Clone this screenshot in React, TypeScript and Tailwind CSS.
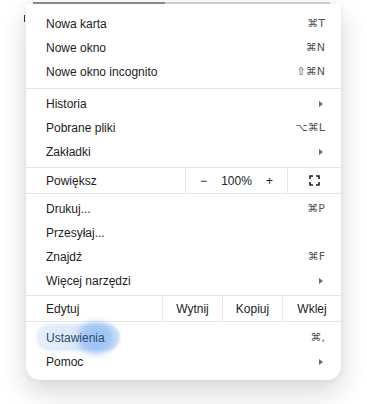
import type { ReactNode } from "react";

const font = { fontFamily: '"Liberation Sans", "DejaVu Sans", Arial, sans-serif' };

// mała strzałka podmenu
function Arrow() {
  return (
    <svg width="6" height="8" viewBox="0 0 6 8" className="mr-[1px]">
      <path d="M1 1 L5 4 L1 7 Z" fill="#6b6b6b" />
    </svg>
  );
}

function FullscreenIcon() {
  return (
    <svg width="11" height="11" viewBox="0 0 11 11" fill="none" stroke="#222" strokeWidth="1.6">
      <path d="M1 4 V1 H4" />
      <path d="M7 1 H10 V4" />
      <path d="M10 7 V10 H7" />
      <path d="M4 10 H1 V7" />
    </svg>
  );
}

function Item({ label, right }: { label: string; right?: ReactNode }) {
  return (
    <div className="flex h-6 items-center justify-between pl-5 pr-4">
      <span className="text-[12px] text-[#222]">{label}</span>
      {typeof right === "string" ? (
        <span className="text-[11px] text-[#555]" style={{ fontFamily: '"DejaVu Sans", sans-serif' }}>
          {right}
        </span>
      ) : (
        right
      )}
    </div>
  );
}

function Sep() {
  return <div className="h-px bg-[#e6e6e6]" />;
}

export default function App() {
  return (
    <div className="relative h-[404px] w-[367px] overflow-hidden bg-white" style={font}>
      {/* pasek przeglądarki pod menu */}
      <div className="absolute left-[33px] top-[2px] h-[2px] w-[132px] bg-[#8b919b]" />
      <div className="absolute left-[165px] top-[2px] h-[2px] w-[165px] bg-[#d5d8dd]" />
      <div className="absolute left-[24px] top-[15px] h-[7px] w-px bg-[#333]" />

      <div className="relative ml-[26px] mt-[4px] w-[315px] rounded-b-[14px] rounded-t-[3px] bg-white pb-[6px] shadow-[0_12px_28px_rgba(0,0,0,0.16),0_0_6px_rgba(0,0,0,0.06)]">
        <div className="pb-1 pt-2">
          <Item label="Nowa karta" right="⌘T" />
          <Item label="Nowe okno" right="⌘N" />
          <Item label="Nowe okno incognito" right="⇧⌘N" />
        </div>
        <Sep />
        <div className="pb-[3px] pt-[3px]">
          <Item label="Historia" right={<Arrow />} />
          <Item label="Pobrane pliki" right="⌥⌘L" />
          <Item label="Zakładki" right={<Arrow />} />
        </div>
        <Sep />
        <div className="flex h-[25px] items-center text-[12px] text-[#222]">
          <div className="flex h-full w-[159px] items-center pl-5">Powiększ</div>
          <div className="flex h-full w-[102px] items-center justify-between border-l border-[#e6e6e6] px-[14px]">
            <span>−</span>
            <span>100%</span>
            <span>+</span>
          </div>
          <div className="flex h-full flex-1 items-center justify-center border-l border-[#e6e6e6]">
            <FullscreenIcon />
          </div>
        </div>
        <Sep />
        <div className="pb-[2px] pt-[3px]">
          <Item label="Drukuj..." right="⌘P" />
          <Item label="Przesyłaj..." />
          <Item label="Znajdź" right="⌘F" />
          <Item label="Więcej narzędzi" right={<Arrow />} />
        </div>
        <Sep />
        <div className="flex h-[25px] items-center text-[12px] text-[#222]">
          <div className="flex h-full w-[136px] items-center pl-5">Edytuj</div>
          <div className="flex h-full w-[60px] items-center justify-center border-l border-[#e6e6e6]">Wytnij</div>
          <div className="flex h-full w-[60px] items-center justify-center border-l border-[#e6e6e6]">Kopiuj</div>
          <div className="flex h-full flex-1 items-center justify-center border-l border-[#e6e6e6]">Wklej</div>
        </div>
        <Sep />
        <div className="relative pt-1">
          {/* efekt kliknięcia */}
          <div className="absolute left-[10px] top-[2px] h-[27px] w-[84px] rounded-full bg-gradient-to-r from-[#e8effb] to-[#cfe0f7] blur-[1px]" />
          <div className="absolute left-[52px] top-0 h-[32px] w-[36px] rounded-full bg-[#8dbaf2] opacity-70 blur-[3px]" />
          <div className="relative flex h-6 items-center justify-between pl-5 pr-4">
            <span className="text-[12px] text-[#2b4a70]">Ustawienia</span>
            <span className="text-[11px] text-[#555]" style={{ fontFamily: '"DejaVu Sans", sans-serif' }}>⌘,</span>
          </div>
          <Item label="Pomoc" right={<Arrow />} />
        </div>
      </div>
    </div>
  );
}
